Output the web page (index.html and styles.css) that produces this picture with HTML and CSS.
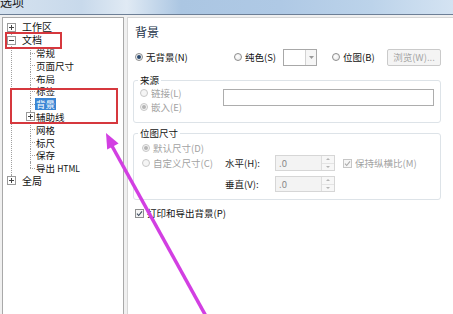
FILE: index.html
```html
<!DOCTYPE html>
<html lang="zh-CN">
<head>
<meta charset="utf-8">
<title>选项</title>
<link rel="stylesheet" href="styles.css">
</head>
<body>
<div class="titlebar"><span class="title">选项</span></div>
<div class="main">
  <div class="tree">
    <ul class="root">
      <li>
        <div class="row"><svg class="exp" width="9" height="9" viewBox="0 0 9 9"><rect x="0.5" y="0.5" width="8" height="8" fill="#fff" stroke="#9a9a9a"/><path d="M2 4.5h5M4.5 2v5" stroke="#444"/></svg><span class="label">工作区</span></div>
      </li>
      <li>
        <div class="row"><svg class="exp" width="9" height="9" viewBox="0 0 9 9"><rect x="0.5" y="0.5" width="8" height="8" fill="#fff" stroke="#9a9a9a"/><path d="M2 4.5h5" stroke="#444"/></svg><span class="label">文档</span></div>
        <ul class="children">
          <li><div class="row"><span class="label">常规</span></div></li>
          <li><div class="row"><span class="label">页面尺寸</span></div></li>
          <li><div class="row"><span class="label">布局</span></div></li>
          <li><div class="row"><span class="label">标签</span></div></li>
          <li class="selected"><div class="row"><span class="label">背景</span></div></li>
          <li class="has-exp"><div class="row"><svg class="exp" width="9" height="9" viewBox="0 0 9 9"><rect x="0.5" y="0.5" width="8" height="8" fill="#fff" stroke="#9a9a9a"/><path d="M2 4.5h5M4.5 2v5" stroke="#444"/></svg><span class="label">辅助线</span></div></li>
          <li><div class="row"><span class="label">网格</span></div></li>
          <li><div class="row"><span class="label">标尺</span></div></li>
          <li><div class="row"><span class="label">保存</span></div></li>
          <li><div class="row"><span class="label">导出 <span class="latin">HTML</span></span></div></li>
        </ul>
      </li>
      <li>
        <div class="row"><svg class="exp" width="9" height="9" viewBox="0 0 9 9"><rect x="0.5" y="0.5" width="8" height="8" fill="#fff" stroke="#9a9a9a"/><path d="M2 4.5h5M4.5 2v5" stroke="#444"/></svg><span class="label">全局</span></div>
      </li>
    </ul>
  </div>

  <div class="panel">
    <div class="heading">背景</div>
    <div class="mode-row">
      <label class="opt"><span class="radio checked"></span>无背景(N)</label>
      <label class="opt"><span class="radio"></span>纯色(S)</label>
      <div class="colorpick"><span class="swatch"></span><span class="drop"><svg width="5" height="3" viewBox="0 0 5 3"><path d="M0 0h5L2.5 3z" fill="#9a9a9a"/></svg></span></div>
      <label class="opt"><span class="radio"></span>位图(B)</label>
      <button class="btn" type="button" disabled>浏览(W)...</button>
    </div>

    <fieldset class="group group-source">
      <legend>来源</legend>
      <div class="source-body">
        <div class="source-opts">
          <label class="opt off line"><span class="radio off"></span>链接(L)</label>
          <label class="opt off line"><span class="radio off checked"></span>嵌入(E)</label>
        </div>
        <div class="textbox"></div>
      </div>
    </fieldset>

    <fieldset class="group group-size">
      <legend>位图尺寸</legend>
      <div class="size-grid">
        <label class="opt off r1"><span class="radio off checked"></span>默认尺寸(D)</label>
        <label class="opt off r2"><span class="radio off"></span>自定义尺寸(C)</label>
        <span class="field-label r2 c2">水平(H):</span>
        <div class="spin r2 c3"><span class="spin-val">.0</span><span class="spin-btns"><span class="spin-up"></span><span class="spin-down"></span></span></div>
        <label class="opt off r2 c4"><svg class="check" width="9" height="9" viewBox="0 0 9 9"><rect x="0.5" y="0.5" width="8" height="8" fill="#f6f6f6" stroke="#c6c6c6"/><path d="M2 4.6l1.7 1.9L7 2.3" fill="none" stroke="#a9a9a9" stroke-width="1.1"/></svg>保持纵横比(M)</label>
        <span class="field-label r3 c2">垂直(V):</span>
        <div class="spin r3 c3"><span class="spin-val">.0</span><span class="spin-btns"><span class="spin-up"></span><span class="spin-down"></span></span></div>
      </div>
    </fieldset>

    <label class="opt print-row"><svg class="check" width="9" height="9" viewBox="0 0 9 9"><rect x="0.5" y="0.5" width="8" height="8" fill="#f4f4f4" stroke="#8e8f8f"/><path d="M2 4.6l1.7 1.9L7 2.3" fill="none" stroke="#3c4a5e" stroke-width="1.1"/></svg>打印和导出背景(P)</label>
  </div>
</div>

<div class="mark mark-doc"></div>
<div class="mark mark-bg"></div>
<svg class="arrow" width="453" height="314" viewBox="0 0 453 314">
  <line x1="112" y1="146" x2="207" y2="318" stroke="#d23fe2" stroke-width="3.5"/>
  <polygon points="106,133 107.2,149.6 118.6,143.5" fill="#d23fe2"/>
</svg>
</body>
</html>
```

FILE: styles.css
```css
* { box-sizing: border-box; }
html, body { margin: 0; padding: 0; }
body {
  width: 453px;
  height: 314px;
  overflow: hidden;
  position: relative;
  background: #f0f0f0;
  font-family: "Noto Sans CJK SC", "Noto Sans", sans-serif;
  font-size: 9.5px;
  color: #111;
}

.titlebar {
  height: 15px;
  border-bottom: 1px solid #6d7f96;
  background: linear-gradient(90deg, #d5e2ef 0%, #c8d9eb 18%, #e0eaf4 28%, #abc6e2 40%, #afc9e5 62%, #bcd3ea 82%, #d4e3f2 100%);
  overflow: hidden;
}
.title {
  display: block;
  font-size: 12px;
  line-height: 12px;
  margin-top: -4px;
  color: #151515;
}

.main {
  display: flex;
  gap: 3px;
  padding: 2px 0 0 2px;
  height: 299px;
}

/* Tree */
.tree {
  width: 122px;
  flex: none;
  background: #fff;
  border: 1px solid #a9a9a9;
  border-bottom: none;
  padding-top: 3px;
}
.tree ul { list-style: none; margin: 0; padding: 0; }
.tree li { position: relative; }
.row {
  height: 12.8px;
  display: flex;
  align-items: center;
  white-space: nowrap;
}
.label { padding: 0 1px; line-height: 12px; }
.latin { font-size: 8.5px; }
.exp { position: relative; z-index: 1; flex: none; display: block; }

.root > li > .row { padding-left: 4px; }
.root > li > .row .exp { margin-right: 5px; }
.root > li > .row .label { font-size: 10px; }
.root > li::before {
  content: "";
  position: absolute;
  left: 8px;
  top: 0;
  bottom: 0;
  border-left: 1px dotted #a0a0a0;
}
.root > li:first-child::before { top: 6.4px; }
.root > li:last-child::before { bottom: auto; height: 6.4px; }

.children { margin-left: 27px !important; }
.children > li { padding-left: 5px; }
.children > li::before {
  content: "";
  position: absolute;
  left: 0;
  top: 0;
  bottom: 0;
  border-left: 1px dotted #a0a0a0;
}
.children > li:last-child::before { bottom: auto; height: 6.4px; }
.children > li::after {
  content: "";
  position: absolute;
  left: 0;
  top: 6px;
  width: 5px;
  border-top: 1px dotted #a0a0a0;
}
.children > li.has-exp::after { display: none; }
.has-exp .exp { margin-left: -9px; }
.selected .label { background: #3a86d4; color: #fff; }

/* Right panel */
.panel {
  flex: 1;
  background: #fff;
  border: 1px solid #d6d6d6;
  border-right: none;
  border-bottom: none;
  padding-top: 6px;
}
.heading {
  font-size: 12px;
  line-height: 16px;
  height: 16px;
  padding-left: 7px;
  color: #23334a;
}
.mode-row {
  display: grid;
  grid-template-columns: 99px 49px 49px 55px 54px;
  align-items: center;
  height: 18px;
  margin-top: 8px;
  padding-left: 7px;
}
.opt {
  display: flex;
  align-items: center;
  gap: 3px;
  white-space: nowrap;
  line-height: 12px;
}
.opt.off { color: #a2a2a2; }
.radio {
  position: relative;
  flex: none;
  width: 8px;
  height: 8px;
  border-radius: 50%;
  border: 1px solid #8d8d8d;
  background: radial-gradient(circle at 40% 40%, #fff 0%, #e4e4e4 100%);
}
.radio.checked::after {
  content: "";
  position: absolute;
  left: 1px;
  top: 1px;
  width: 4px;
  height: 4px;
  border-radius: 50%;
  background: #2b4a70;
}
.radio.off { border-color: #c8c8c8; background: #f5f5f5; }
.radio.off.checked::after { background: #b4b4b4; }

.colorpick {
  display: flex;
  width: 34px;
  height: 17px;
  border: 1px solid #a8a8a8;
  background: #fff;
}
.swatch { flex: 1; border-right: 1px solid #d2d2d2; }
.drop {
  width: 10px;
  display: flex;
  align-items: center;
  justify-content: center;
  background: #f6f6f6;
}
.btn {
  width: 54px;
  height: 17px;
  padding: 0;
  border: 1px solid #cacaca;
  border-radius: 2px;
  background: #f4f4f4;
  color: #a5a5a5;
  font: inherit;
  line-height: 14px;
}

.group {
  margin: 8px 0 0 5px;
  width: 308px;
  min-width: 0;
  border: 1px solid #dde3e8;
  border-radius: 3px;
}
.group legend {
  padding: 0 2px;
  height: 12px;
  line-height: 12px;
  font-size: 9.5px;
  color: #111;
}
.group-source { padding: 0 6px 8px 6px; }
.group-source legend { margin-left: -2px; }
.group-size { margin-top: 4px; padding: 2px 8px 7px 8px; }
.group-size legend { margin-left: -4px; }

.source-body { display: flex; }
.source-opts { width: 83px; flex: none; }
.line { height: 14px; }
.textbox {
  width: 211px;
  height: 17px;
  margin-top: 3px;
  border: 1px solid #adadad;
  background: #fff;
}

.size-grid {
  display: grid;
  grid-template-columns: 83px 50px 60px auto;
  grid-template-rows: 14px 16px 21px;
  align-items: center;
}
.r1 { grid-row: 1; grid-column: 1; }
.r2 { grid-row: 2; }
.r3 { grid-row: 3; align-self: end; }
.r2.opt, .r1.opt { grid-column: 1; }
.c2 { grid-column: 2; }
.c3 { grid-column: 3; }
.r2.c4 { grid-column: 4; margin-left: 8px; }
.field-label { color: #222; line-height: 12px; }
.r3.field-label { align-self: center; margin-top: 5px; }

.spin {
  display: flex;
  height: 16px;
  border: 1px solid #d6d6d6;
  background: #f3f3f3;
}
.spin-val {
  flex: 1;
  padding-left: 3px;
  line-height: 14px;
  color: #8a8a8a;
}
.spin-btns {
  width: 13px;
  display: flex;
  flex-direction: column;
  border-left: 1px solid #dedede;
  background: #f7f7f7;
}
.spin-up, .spin-down {
  flex: 1;
  position: relative;
}
.spin-up { border-bottom: 1px solid #e4e4e4; }
.spin-up::after, .spin-down::after {
  content: "";
  position: absolute;
  left: 4px;
  top: 2px;
  border-left: 2px solid transparent;
  border-right: 2px solid transparent;
}
.spin-up::after { border-bottom: 2px solid #b4b4b4; }
.spin-down::after { border-top: 2px solid #b4b4b4; top: 2px; }
.check { flex: none; display: block; }

.print-row {
  height: 14px;
  margin-top: 6px;
  padding-left: 7px;
  gap: 3px;
}

/* Annotations */
.mark {
  position: absolute;
  border: 2px solid #d6383e;
}
.mark-doc { left: 5px; top: 32px; width: 57px; height: 17px; }
.mark-bg { left: 10px; top: 88px; width: 108px; height: 36px; }
.arrow {
  position: absolute;
  left: 0;
  top: 0;
  pointer-events: none;
}
```
